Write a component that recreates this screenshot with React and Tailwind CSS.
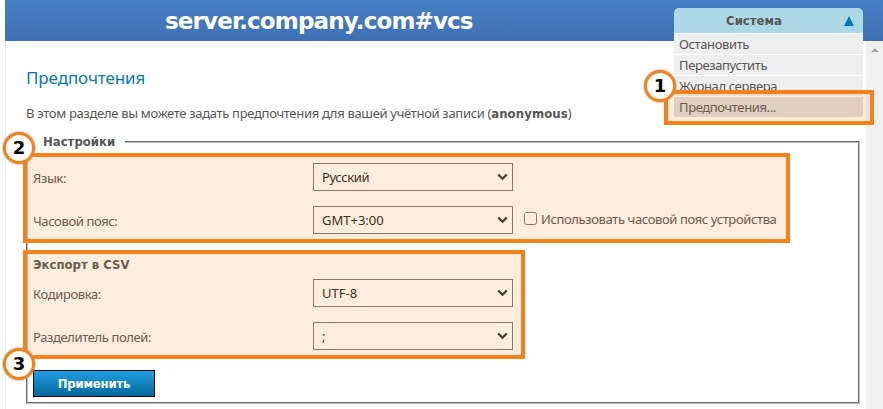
import React from "react";

function Select({ value }) {
  return (
    <div className="flex h-7 w-[200px] shrink-0 items-center justify-between border border-[#767676] bg-white pr-1 pl-2 text-[13px] text-[#222]">
      <span className={/^[A-Z]/.test(value) ? "pb-px tracking-normal" : "pb-px"}>{value}</span>
      <svg width="11" height="8" viewBox="0 0 11 8" fill="none" stroke="#303030" strokeWidth="2.3">
        <path d="M1.2 1.5 5.5 5.7 9.8 1.5" />
      </svg>
    </div>
  );
}

function Row({ label, value, children, className = "" }) {
  return (
    <div className={`flex h-7 items-center ${className}`}>
      <span className="w-[280px] shrink-0 pt-[2px]">{label}</span>
      <Select value={value} />
      {children}
    </div>
  );
}

function Badge({ n, className }) {
  return (
    <div className={`absolute flex size-8 items-center justify-center rounded-full border-[3px] border-[#f58118] bg-white font-['DejaVu_Sans',sans-serif] text-[18px] leading-none font-bold tracking-normal text-black shadow-[0_0_1px_1px_rgba(160,160,160,0.5)] ${className}`}>
      {n}
    </div>
  );
}

function Highlight({ className }) {
  return <div className={`pointer-events-none absolute border-4 border-[#f58118] bg-[#f48117]/14 bg-clip-padding ${className}`} />;
}

const items = ["Остановить", "Перезапустить", "Журнал сервера", "Предпочтения..."];

function SystemMenu() {
  return (
    <div className="absolute top-2 left-[674px] w-[189px] text-[13px]">
      <div className="flex h-[25px] items-center rounded-t-[5px] bg-[#add9e6] pr-[9px] font-bold">
        <span className="grow pr-[10px] text-center font-['DejaVu_Sans_Condensed','DejaVu_Sans',sans-serif] tracking-normal">Система</span>
        <svg width="10" height="10" viewBox="0 0 10 10">
          <path d="M5 0 10 10H0Z" fill="#007ab8" />
        </svg>
      </div>
      {items.map((t, i) => (
        <div key={t} className={`flex h-[21px] items-center border-t border-white pl-[5px] leading-5 ${i === 3 ? "bg-[#ddd]" : "bg-[#eee]"}`}>
          {t}
        </div>
      ))}
    </div>
  );
}

export default function App() {
  return (
    <div className="relative flex h-[409px] w-[883px] flex-col overflow-hidden bg-white pl-[5px] font-['Noto_Sans',sans-serif] text-[13px] leading-5 tracking-[-0.38px] text-[#555]">
      <header className="flex h-[41px] shrink-0 items-center bg-linear-to-b from-[#457fc2] to-[#4070b6] pl-40">
        <h1 className="font-['DejaVu_Sans',sans-serif] text-[23px] font-bold tracking-[-0.85px] whitespace-nowrap text-white">server.company.com#vcs</h1>
      </header>
      <div className="flex grow">
        <main className="w-[861px] border-l border-[#eee] pr-1.5 pl-5">
          <h2 className="mt-[25px] h-6 text-[17px] leading-6 tracking-[-0.1px] text-[#0a78b4]">Предпочтения</h2>
          <p className="mt-[13px] h-5 tracking-[-0.31px] whitespace-nowrap">
            В этом разделе вы можете задать предпочтения для вашей учётной записи (<b className="font-['DejaVu_Sans_Condensed','DejaVu_Sans',sans-serif] tracking-[0.1px]">anonymous</b>)
          </p>
          <fieldset className="mt-[9px] h-[272px] border-2 border-[#c0c0c0] pl-[5px] [border-style:groove]">
            <legend className="-ml-[2px] h-5 pr-[10px] pl-3 font-['DejaVu_Sans_Condensed','DejaVu_Sans',sans-serif] font-bold tracking-normal">Настройки</legend>
            <Row label="Язык:" value="Русский" className="mt-[11px]" />
            <Row label="Часовой пояс:" value="GMT+3:00" className="mt-[15px]">
              <span className="mb-[3px] ml-[11px] size-[13px] rounded-[2.5px] border border-[#767676] bg-white" />
              <span className="mb-[2px] ml-[4px] whitespace-nowrap">Использовать часовой пояс устройства</span>
            </Row>
            <div className="mt-[21px] h-5 font-['DejaVu_Sans_Condensed','DejaVu_Sans',sans-serif] font-bold tracking-normal">Экспорт в CSV</div>
            <Row label="Кодировка:" value="UTF-8" className="mt-[4px]" />
            <Row label="Разделитель полей:" value=";" className="mt-[15px]" />
            <button className="mt-5 flex h-[27px] w-[122px] items-center justify-center border border-black bg-linear-to-b from-[#1f9fe3] to-[#04689c] font-['DejaVu_Sans_Condensed','DejaVu_Sans',sans-serif] font-bold tracking-[-0.2px] text-white">Применить</button>
          </fieldset>
        </main>
        <div className="flex w-[17px] justify-center bg-[#f0f0f0] pt-[7px]">
          <svg width="8" height="4" viewBox="0 0 8 4">
            <path d="M4 0 8 4H0Z" fill="#a3a3a3" />
          </svg>
        </div>
      </div>
      <SystemMenu />
      <Highlight className="top-[90px] left-[664px] h-[35px] w-[210px]" />
      <Highlight className="top-[153px] left-[23px] h-[90px] w-[767px]" />
      <Highlight className="top-[250px] left-[23px] h-[109px] w-[502px]" />
      <Badge n="1" className="top-[70px] left-[644px]" />
      <Badge n="2" className="top-[132px] left-[3px]" />
      <Badge n="3" className="top-[348px] left-[3px]" />
    </div>
  );
}
